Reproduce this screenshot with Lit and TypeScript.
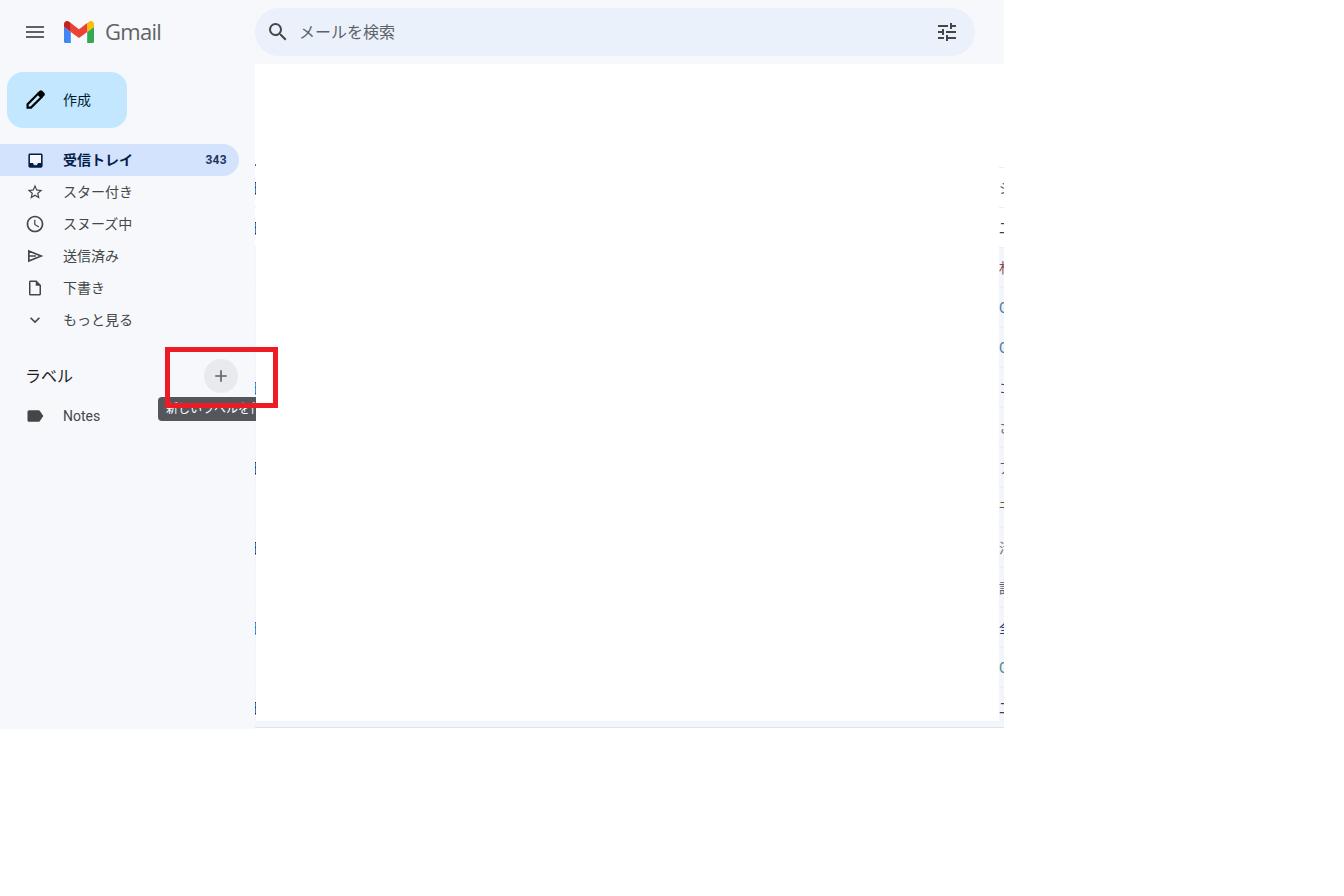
import { LitElement, html, css, svg } from "lit";
import { customElement } from "lit/decorators.js";

const ICONS = {
  menu: "M3 18h18v-2H3v2zm0-5h18v-2H3v2zm0-7v2h18V6H3z",
  search: "M15.5 14h-.79l-.28-.27A6.471 6.471 0 0 0 16 9.5 6.5 6.5 0 1 0 9.5 16c1.61 0 3.09-.59 4.23-1.57l.27.28v.79l5 4.99L20.49 19l-4.99-5zm-6 0C7.01 14 5 11.99 5 9.5S7.01 5 9.5 5 14 7.01 14 9.5 11.99 14 9.5 14z",
  tune: "M3 17v2h6v-2H3zM3 5v2h10V5H3zm10 16v-2h8v-2h-8v-2h-2v6h2zM7 9v2H3v2h4v2h2V9H7zm14 4v-2H11v2h10zm-6-4h2V7h4V5h-4V3h-2v6z",
  inbox: "M19 3H5c-1.1 0-2 .9-2 2v14c0 1.1.9 2 2 2h14c1.1 0 2-.9 2-2V5c0-1.1-.9-2-2-2zm0 12h-4c0 1.66-1.35 3-3 3s-3-1.34-3-3H5V5h14v10z",
  star: "M22 9.24l-7.19-.62L12 2 9.19 8.63 2 9.24l5.46 4.73L5.82 21 12 17.27 18.18 21l-1.63-7.03L22 9.24zM12 15.4l-3.76 2.27 1-4.28-3.32-2.88 4.38-.38L12 6.1l1.71 4.04 4.38.38-3.32 2.88 1 4.28L12 15.4z",
  clock: "M11.99 2C6.47 2 2 6.48 2 12s4.47 10 9.99 10C17.52 22 22 17.52 22 12S17.52 2 11.99 2zM12 20c-4.42 0-8-3.58-8-8s3.58-8 8-8 8 3.58 8 8-3.58 8-8 8zm.5-13H11v6l5.25 3.15.75-1.23-4.5-2.67z",
  file: "M14 2H6c-1.1 0-1.99.9-1.99 2L4 20c0 1.1.89 2 1.99 2H18c1.1 0 2-.9 2-2V8l-6-6zM6 20V4h7v5h5v11H6z",
  more: "M16.59 8.59L12 13.17 7.41 8.59 6 10l6 6 6-6z",
  label: "M17.63 5.84C17.27 5.33 16.67 5 16 5L5 5.01C3.9 5.01 3 5.9 3 7v10c0 1.1.9 1.99 2 1.99L16 19c.67 0 1.27-.33 1.63-.84L22 12l-4.37-6.16z",
  plus: "M19 13h-6v6h-2v-6H5v-2h6V5h2v6h6v2z",
};

type IconName = keyof typeof ICONS;

const icon = (name: IconName, cls: string) => html`
  <svg class=${cls} viewBox="0 0 24 24" aria-hidden="true"><path d=${ICONS[name]}></path></svg>
`;

const logo = svg`
  <path fill="#4285f4" d="M58 108h14V74L52 59v43c0 3.32 2.69 6 6 6"/>
  <path fill="#34a853" d="M120 108h14c3.32 0 6-2.69 6-6V59l-20 15"/>
  <path fill="#fbbc04" d="M120 48v26l20-15v-8c0-7.42-8.47-11.65-14.4-7.2"/>
  <path fill="#ea4335" d="M72 74V48l24 18 24-18v26L96 92"/>
  <path fill="#c5221f" d="M52 51v8l20 15V48l-5.6-4.2c-5.94-4.45-14.4-.22-14.4 7.2"/>
`;

const pencil = html`
  <svg class="i24" viewBox="0 0 24 24" aria-hidden="true">
    <path class="pen-line" d="M4.6 19.6v-3.4L15 5.8l3.4 3.4L8 19.6z"></path>
    <path d="M14.4 5l2.2-2.2a1.8 1.8 0 0 1 2.5 0l2.3 2.3a1.8 1.8 0 0 1 0 2.5L19.2 9.8z"></path>
  </svg>
`;

const sendIcon = html`
  <svg class="i20" viewBox="0 0 24 24" aria-hidden="true">
    <path class="send-line" d="M4.6 6.1 19.4 12 4.6 17.9zM4.6 12H13"></path>
  </svg>
`;

const inboxIcon = html`
  <svg class="inbox" viewBox="0 0 24 24" aria-hidden="true">
    <rect class="inbox-bg" x="4" y="4" width="16" height="12"></rect>
    <path d=${ICONS.inbox}></path>
  </svg>
`;

const NAV: { icon: IconName | "send"; text: string; count?: string; active?: boolean }[] = [
  { icon: "inbox", text: "受信トレイ", count: "343", active: true },
  { icon: "star", text: "スター付き" },
  { icon: "clock", text: "スヌーズ中" },
  { icon: "send", text: "送信済み" },
  { icon: "file", text: "下書き" },
  { icon: "more", text: "もっと見る" },
];

const navIcon = (name: IconName | "send") => {
  if (name === "send") return sendIcon;
  if (name === "inbox") return inboxIcon;
  if (name === "star" || name === "file") {
    return html`<span class="slot">${icon(name, "i18")}</span>`;
  }
  return icon(name, "i20");
};

const ROWS: { left: string; leftColor?: string; right: string; color: string; read: boolean }[] = [
  { left: "日", leftColor: "#202124", right: "ジ", color: "#5f6368", read: false },
  { left: "日", leftColor: "#202124", right: "二", color: "#3c4043", read: false },
  { left: "", right: "札", color: "#8a4a4a", read: true },
  { left: "", right: "G", color: "#4a7aa0", read: true },
  { left: "", right: "G", color: "#4a7aa0", read: true },
  { left: "日", leftColor: "#1a56c4", right: "コ", color: "#45406a", read: true },
  { left: "", right: "さ", color: "#6a6a6a", read: true },
  { left: "日", leftColor: "#202124", right: "ア", color: "#5f5560", read: true },
  { left: "", right: "干", color: "#5f5a40", read: true },
  { left: "日", leftColor: "#202124", right: "活", color: "#80706a", read: true },
  { left: "", right: "診", color: "#50606a", read: true },
  { left: "日", leftColor: "#1a56c4", right: "全", color: "#1a3a7a", read: true },
  { left: "", right: "G", color: "#4a8a80", read: true },
  { left: "日", leftColor: "#202124", right: "二", color: "#3c4043", read: true },
];

@customElement("app-root")
export class AppRoot extends LitElement {
  static styles = css`
    :host {
      display: block;
      font-family: Roboto, "Noto Sans CJK JP", sans-serif;
    }
    .shell {
      position: relative;
      width: 1004px;
      height: 729px;
      background: #f6f8fc;
      display: grid;
      grid-template-columns: 255px 1fr;
      grid-template-rows: 64px 1fr;
      overflow: hidden;
    }
    svg { display: block; fill: #444746; flex: none; }

    .brand { display: flex; align-items: center; padding-left: 23px; }
    .i24 { width: 24px; height: 24px; }
    .menu { fill: #5f6368; }
    .logo { width: 30px; height: 22.5px; margin-left: 17px; }
    .wordmark {
      margin-left: 11px;
      padding-bottom: 2px;
      font-size: 22px;
      color: #5f6368;
      font-family: "Open Sans", Roboto, sans-serif;
      letter-spacing: -0.7px;
    }

    .topbar { display: flex; align-items: center; }
    .search {
      width: 720px;
      height: 48px;
      box-sizing: border-box;
      border-radius: 24px;
      background: #eaf1fb;
      display: flex;
      align-items: center;
      padding: 0 16px 0 11px;
    }
    .placeholder {
      margin-left: 9px;
      padding-bottom: 3px;
      flex: 1;
      font-size: 16px;
      color: #5f6368;
    }
    .tune { width: 24px; height: 24px; }

    .side { padding-top: 8px; min-width: 0; }
    .compose {
      margin-left: 7px;
      width: 120px;
      height: 56px;
      border-radius: 16px;
      background: #c2e7ff;
      display: flex;
      align-items: center;
      padding-left: 16px;
      box-sizing: border-box;
      font-size: 14px;
      color: #001d35;
      gap: 16px;
    }
    .compose svg { fill: #000; }
    .compose span { padding-bottom: 2px; }
    .pen-line { fill: none; stroke: #000; stroke-width: 2.2; stroke-linejoin: miter; }

    .nav { margin-top: 16px; width: 239px; }
    .row {
      height: 32px;
      display: flex;
      align-items: center;
      padding: 0 12px 0 25px;
      font-size: 14px;
      color: #444746;
      gap: 18px;
    }
    .row .text { flex: 1; }
    .nav .text { padding-bottom: 2px; }
    .i20 { width: 20px; height: 20px; }
    .i18 { width: 18px; height: 18px; }
    .slot {
      width: 20px;
      height: 20px;
      flex: none;
      display: flex;
      align-items: center;
      justify-content: center;
    }
    .inbox { width: 19px; height: 19px; margin: 0 0.5px; }
    .inbox-bg { fill: #f6f8fc; }
    .send-line { fill: none; stroke: #444746; stroke-width: 2; }
    .row.active {
      background: #d3e3fd;
      border-radius: 0 16px 16px 0;
      color: #041e49;
      font-weight: 700;
    }
    .row.active svg path { fill: #041e49; }
    .count { font-size: 12px; letter-spacing: 0.3px; color: #1f3760; }

    .labels {
      margin-top: 23px;
      height: 34px;
      width: 238px;
      display: flex;
      align-items: center;
      justify-content: space-between;
      padding-left: 25px;
      box-sizing: border-box;
      font-size: 16px;
      color: #1f1f1f;
    }
    .labels > span:first-child { padding-bottom: 3px; }
    .add {
      width: 34px;
      height: 34px;
      border-radius: 50%;
      background: #e8eaed;
      display: flex;
      align-items: center;
      justify-content: center;
    }
    .add svg { width: 20px; height: 20px; fill: #5f6368; }
    .notes { margin-top: 7px; width: 239px; }

    .main {
      position: relative;
      display: flex;
      flex-direction: column;
      background: #fff;
    }
    .head {
      height: 103px;
      flex: none;
      display: flex;
      flex-direction: column;
      justify-content: flex-end;
    }
    .speck { width: 1px; height: 2px; margin-bottom: 1px; background: #1a73e8; }
    .mail {
      height: 40px;
      box-sizing: border-box;
      display: flex;
      align-items: center;
      justify-content: space-between;
      border-top: 1px solid #eceef1;
      font-size: 14px;
      line-height: 1;
    }
    .mail.read { background: #f2f6fc; }
    .frag-l { width: 1px; overflow: hidden; white-space: nowrap; }
    .frag-l span { display: block; margin-left: -3px; }
    .frag-r { width: 5px; overflow: hidden; white-space: nowrap; }
    .foot { flex: 1; background: #fff; border-top: 1px solid #dfe3ec; }
    .cover {
      position: absolute;
      left: 1px;
      right: 5px;
      top: 0;
      height: 657px;
      background: #fff;
    }

    .tip {
      position: absolute;
      left: 158px;
      top: 397px;
      width: 98px;
      height: 24px;
      box-sizing: border-box;
      padding-left: 8px;
      background: #53565a;
      border-radius: 4px 0 0 4px;
      color: #fff;
      font-size: 12px;
      line-height: 24px;
      white-space: nowrap;
      overflow: hidden;
    }
    .mark {
      position: absolute;
      left: 165px;
      top: 347px;
      width: 113px;
      height: 61px;
      box-sizing: border-box;
      border: 5px solid #ed1c24;
    }
    .page { position: absolute; left: 0; top: 0; }
  `;

  render() {
    return html`
      <div class="page">
        <div class="shell">
          <div class="brand">
            ${icon("menu", "i24 menu")}
            <svg class="logo" viewBox="52 42 88 66" aria-hidden="true">${logo}</svg>
            <span class="wordmark">Gmail</span>
          </div>
          <div class="topbar">
            <div class="search">
              ${icon("search", "i24")}
              <span class="placeholder">メールを検索</span>
              ${icon("tune", "tune")}
            </div>
          </div>
          <aside class="side">
            <div class="compose">${pencil}<span>作成</span></div>
            <nav class="nav">
              ${NAV.map(
                (n) => html`
                  <div class="row ${n.active ? "active" : ""}">
                    ${navIcon(n.icon)}
                    <span class="text">${n.text}</span>
                    ${n.count ? html`<span class="count">${n.count}</span>` : ""}
                  </div>
                `
              )}
            </nav>
            <div class="labels">
              <span>ラベル</span>
              <span class="add">${icon("plus", "")}</span>
            </div>
            <div class="row notes">${icon("label", "i20")}<span class="text">Notes</span></div>
          </aside>
          <main class="main">
            <div class="head"><div class="speck"></div></div>
            ${ROWS.map(
              (r) => html`
                <div class="mail ${r.read ? "read" : ""}">
                  <div class="frag-l" style="color:${r.leftColor ?? "#202124"}"><span>${r.left || "\u00a0"}</span></div>
                  <div class="frag-r" style="color:${r.color}">${r.right}</div>
                </div>
              `
            )}
            <div class="foot"></div>
            <div class="cover"></div>
          </main>
          <div class="tip">新しいラベルを作成</div>
          <div class="mark"></div>
        </div>
      </div>
    `;
  }
}
